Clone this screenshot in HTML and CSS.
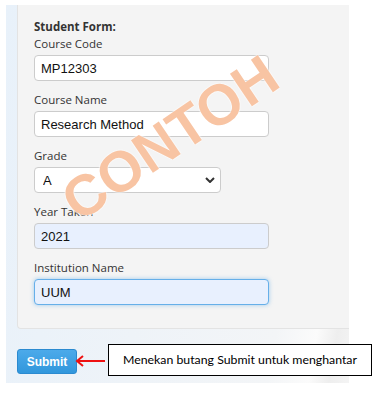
FILE: index.html
```html
<!DOCTYPE html>
<html lang="en">
<head>
    <meta charset="UTF-8">
    <meta name="viewport" content="width=device-width, initial-scale=1.0">
    <title>Student Form</title>
    <link rel="stylesheet" href="styles.css">
</head>
<body>

<div class="frame">
    <form class="card">
        <span class="watermark">CONTOH</span>
        <p class="form-title">Student Form:</p>

        <div class="field">
            <label for="courseCode">Course Code</label>
            <input type="text" id="courseCode" class="box wide" value="MP12303">
        </div>
        <div class="field">
            <label for="courseName">Course Name</label>
            <input type="text" id="courseName" class="box wide" value="Research Method">
        </div>
        <div class="field">
            <label for="grade">Grade</label>
            <select id="grade" class="box narrow">
                <option>A</option>
                <option>B</option>
                <option>C</option>
            </select>
        </div>
        <div class="field">
            <label for="yearTaken">Year Taken</label>
            <input type="text" id="yearTaken" class="box wide filled" value="2021">
        </div>
        <div class="field">
            <label for="institution">Institution Name</label>
            <input type="text" id="institution" class="box wide filled focused" value="UUM">
        </div>
    </form>

    <div class="actions">
        <button type="button" class="submit">Submit</button>
        <svg class="arrow" width="30" height="12" viewBox="0 0 30 12">
            <path d="M2 6 H30" stroke="#ee1111" stroke-width="2" fill="none"/>
            <path d="M8 1 L2 6 L8 11" stroke="#ee1111" stroke-width="2" fill="none"/>
        </svg>
        <div class="note">Menekan butang Submit untuk menghantar</div>
    </div>
</div>

</body>
</html>
```

FILE: styles.css
```css
body {
    margin: 0;
    background: #ffffff;
    font-family: "Open Sans", "Noto Sans", sans-serif;
}
.frame {
    box-sizing: border-box;
    width: 343px;
    height: 378px;
    margin: 5px 0 0 6px;
    padding-left: 11px;
    background: linear-gradient(100deg, #e8f1fa 0%, #eef3f8 45%, #f3f5f7 80%, #fbfbfb 90%, #eeeeee 95%, #f4f4f4 100%);
}
.card {
    position: relative;
    box-sizing: border-box;
    width: 332px;
    margin: 0;
    padding: 14px 0 23px 16px;
    background: #f4f4f4;
    border-left: 1px solid #e3e3e3;
    border-bottom: 1px solid #e3e3e3;
    border-radius: 0 0 0 4px;
}
.form-title {
    margin: 0;
    font-size: 11.5px;
    line-height: 16px;
    font-weight: bold;
    color: #333;
}
.field {
    display: flex;
    flex-direction: column;
    align-items: flex-start;
    margin-bottom: 10px;
}
.field:last-child {
    margin-bottom: 0;
}
label {
    font-size: 11.5px;
    line-height: 18px;
    color: #333;
    margin-bottom: 2px;
}
.box {
    box-sizing: border-box;
    height: 26px;
    margin: 0;
    padding: 0 6px;
    border: 1px solid #cccccc;
    border-radius: 4px;
    background: #ffffff;
    font-family: "Liberation Sans", Arial, sans-serif;
    font-size: 13px;
    color: #111;
    outline: none;
}
.wide {
    width: 235px;
}
.narrow {
    width: 187px;
    padding-left: 8px;
    appearance: none;
    -webkit-appearance: none;
    background-image: url("data:image/svg+xml,%3Csvg xmlns='http://www.w3.org/2000/svg' width='10' height='6' viewBox='0 0 10 6'%3E%3Cpath d='M1 1 L5 5 L9 1' stroke='%23333' stroke-width='2' fill='none'/%3E%3C/svg%3E");
    background-repeat: no-repeat;
    background-position: right 5px center;
}
.filled {
    background: #e8f0fe;
}
.focused {
    border-color: #66afe9;
    box-shadow: 0 0 4px rgba(102, 175, 233, 0.6);
}
.watermark {
    position: absolute;
    left: 152px;
    top: 133px;
    z-index: 2;
    transform: translate(-50%, -50%) rotate(-34deg);
    font-family: "Liberation Sans", Arial, sans-serif;
    font-size: 57px;
    font-weight: bold;
    line-height: 1;
    white-space: nowrap;
    color: #f8c4a3;
    text-shadow: 0 0 2px #ffffff, 0 0 2px #ffffff;
    pointer-events: none;
}
.actions {
    display: flex;
    align-items: center;
    margin-top: 18px;
}
.submit {
    flex-shrink: 0;
    box-sizing: border-box;
    width: 60px;
    height: 25px;
    padding: 0;
    border: 1px solid #2b8ad0;
    border-radius: 3px;
    background: linear-gradient(#4caaea, #3197dc);
    color: #ffffff;
    font-family: "Liberation Sans", Arial, sans-serif;
    font-size: 12px;
    font-weight: bold;
    cursor: pointer;
}
.arrow {
    flex-shrink: 0;
    margin-left: -2px;
    margin-top: -2px;
}
.note {
    flex-shrink: 0;
    box-sizing: border-box;
    width: 264px;
    height: 32px;
    margin-left: 3px;
    margin-top: -3px;
    border: 1px solid #000000;
    background: #ffffff;
    font-family: Lato, "Open Sans", sans-serif;
    font-size: 12.3px;
    line-height: 30px;
    text-align: center;
    color: #000;
}
```
